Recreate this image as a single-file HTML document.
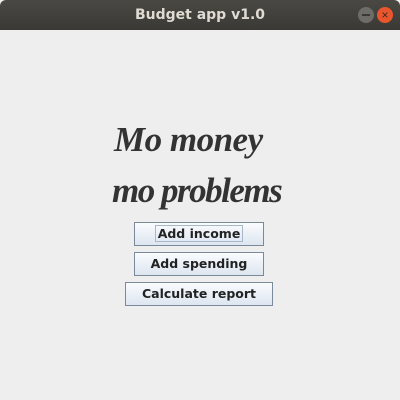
<!DOCTYPE html>
<html><head><style>
body{margin:0;width:400px;height:400px;background:#eeeeee;font-family:"Liberation Sans",sans-serif;position:relative;overflow:hidden}
.tb{position:absolute;left:0;top:0;width:400px;height:30px;background:linear-gradient(#4a4843,#3a3935);border-radius:6px 6px 0 0;color:#dfdbd2;font-weight:bold;font-size:14px;text-align:center;line-height:30px;font-family:"DejaVu Sans",sans-serif}
.min{position:absolute;left:358px;top:7px;width:16px;height:16px;border-radius:50%;background:#6e6c67}
.min:after{content:"";position:absolute;left:4px;top:7px;width:8px;height:2px;background:#3a3935}
.cls{position:absolute;left:377px;top:7px;width:16px;height:16px;border-radius:50%;background:#e9562e;color:#3a2a20;font-size:12px;line-height:16px;text-align:center}
.t{position:absolute;font-family:"Liberation Serif",serif;font-style:italic;font-weight:bold;color:#333;font-size:35px;white-space:nowrap}
.b{position:absolute;height:22px;border:1px solid #7a8a9c;background:linear-gradient(#fafcfe,#dde6f0);font-weight:bold;font-size:12.5px;color:#222;text-align:center;line-height:22px;box-sizing:content-box;font-family:"DejaVu Sans",sans-serif}
</style></head><body>
<div class="tb">Budget app v1.0</div>
<div class="min"></div><div class="cls">×</div>
<div class="t" style="left:114px;top:120px;letter-spacing:-0.5px">Mo money</div>
<div class="t" style="left:112px;top:171px;letter-spacing:-1.5px">mo problems</div>
<div class="b" style="left:134px;top:222px;width:128px"><span style="border:1px solid #a8b8cc;padding:0 2px">Add income</span></div>
<div class="b" style="left:134px;top:252px;width:128px">Add spending</div>
<div class="b" style="left:125px;top:282px;width:146px">Calculate report</div>
</body></html>
